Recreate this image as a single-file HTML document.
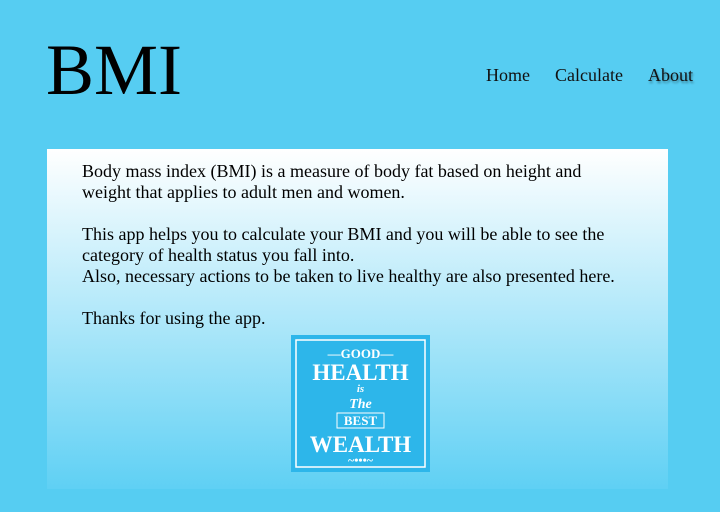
<!DOCTYPE html>
<html><head><style>
body{margin:0;width:720px;height:512px;background:#56cdf2;font-family:"Liberation Serif",serif;position:relative;overflow:hidden}
.t{position:absolute;left:46px;top:30px;font-size:72px;line-height:80px;color:#000}
.n{position:absolute;top:65px;font-size:18px;color:#111}
.p{position:absolute;left:47px;top:149px;width:621px;height:340px;background:linear-gradient(#fff,#5fd0f4)}
.tx{position:absolute;left:82px;top:161px;width:535px;font-size:18px;line-height:21px;color:#000}
.tx p{margin:0 0 21px}
.img{position:absolute;left:291px;top:335px;width:139px;height:137px;background:#2db6ea}
</style></head><body>
<div class="t">BMI</div>
<div class="n" style="left:486px">Home</div>
<div class="n" style="left:555px">Calculate</div>
<div class="n" style="left:648px;text-shadow:1px 2px 2px rgba(0,0,0,.4)">About</div>
<div class="p"></div>
<div class="tx">
<p>Body mass index (BMI) is a measure of body fat based on height and<br>weight that applies to adult men and women.</p>
<p>This app helps you to calculate your BMI and you will be able to see the category of health status you fall into.<br><span style="white-space:nowrap">Also, necessary actions to be taken to live healthy are also presented here.</span></p>
<p>Thanks for using the app.</p>
</div>
<div class="img">
<svg width="139" height="137" viewBox="0 0 139 137">
<rect x="5" y="5" width="129" height="127" fill="none" stroke="#fff" stroke-width="1.5"/>
<g fill="#fff" font-family="Liberation Serif,serif" font-weight="bold" text-anchor="middle">
<text x="69.5" y="23" font-size="13">—GOOD—</text>
<text x="69.5" y="45" font-size="23">HEALTH</text>
<text x="69.5" y="57" font-size="11" font-style="italic">is</text>
<text x="69.5" y="73" font-size="14" font-style="italic">The</text>
<rect x="46" y="78" width="47" height="15" fill="none" stroke="#fff"/>
<text x="69.5" y="90" font-size="13">BEST</text>
<text x="69.5" y="117" font-size="23">WEALTH</text>
<text x="69.5" y="129" font-size="12">~•••~</text>
</g>
</svg>
</div>
</body></html>
